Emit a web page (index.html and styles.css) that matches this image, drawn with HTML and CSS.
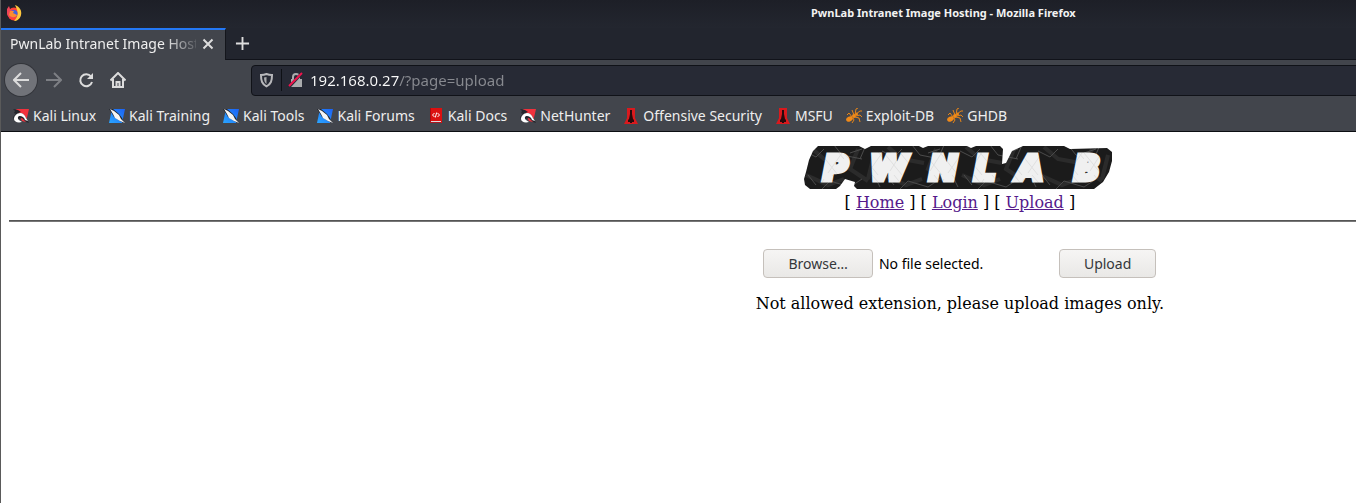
FILE: index.html
```html
<!DOCTYPE html>
<html lang="en">
<head>
<meta charset="utf-8">
<title>PwnLab Intranet Image Hosting</title>
<link rel="stylesheet" href="styles.css">
</head>
<body>
<svg class="defs" aria-hidden="true">
  <defs>
    <linearGradient id="blue" x1="0" y1="1" x2="1" y2="0"><stop offset="0" stop-color="#2aa5ff"/><stop offset="1" stop-color="#1b62f5"/></linearGradient>
    <symbol id="dragon" viewBox="0 0 16 16"><path d="M3 1h13l-3 13-4-1z" fill="#f0313c"/><path d="M0 1l5 1 3 2-5 2-2-1 1-2zM0 9l4-4 5 0 3 3 4 7-3-1-4-4-4 1 1 3-4 0z" fill="#24262d"/><path d="M1 11c0-3 3-6 6-6 3 0 5 2 6 5l2 3-3-1c-1-3-3-4-5-4s-3 2-1 4l3 2c-4 1-8 0-8-3z" fill="#fff"/></symbol>
    <symbol id="knife" viewBox="0 0 16 16"><path d="M3 1h13l-3 14H0z" fill="url(#blue)"/><path d="M0 1l4 0 6 5 3 4 2 5-4-2-6-4-3-5z" fill="#22252c"/><path d="M1 1l4 2 5 4 2 4 4 4-5-2-5-3-2-4z" fill="#f5f5f5"/></symbol>
    <symbol id="book" viewBox="0 0 16 16"><path d="M2 0h12v15H2z" fill="#dc1010"/><path d="M2 0h1v15H2z" fill="#a90b10"/><path d="M2 13h11v2H2z" fill="#ad1720"/><path d="M3 13h10v1H3z" fill="#ddd"/><path d="M6.500 5L4.500 7l2 2M9.500 5l2 2-2 2M8.700 4.500l-1.400 5" fill="none" stroke="#fff"/></symbol>
    <symbol id="tower" viewBox="0 0 16 16"><path d="M4 0h8v10l3 6H1l3-6z" fill="#d9191d"/><path d="M7 2h2v4l1 5 1 1v2H9v1H7v-1H5v-2l1-1 1-5z" fill="#260a0c"/></symbol>
    <symbol id="bug" viewBox="0 0 16 16"><g fill="#f08a19"><ellipse cx="3.500" cy="11" rx="3.500" ry="2.500" transform="rotate(-25 3.500 11)"/><circle cx="8" cy="8" r="2"/><circle cx="10.500" cy="6" r="1.500"/></g><path d="M6 9L3 5 1 7M8 7L6 2M9 7l1-6 2-1M10 6l4-3h2M10 8l4-1 2 2M9 9l4 1 1 4M7 10l1 2-2 3" fill="none" stroke="#e88517"/></symbol>
  </defs>
</svg>
<div class="window">
  <header class="titlebar">
    <svg class="firefox" viewBox="0 0 16 16" aria-hidden="true"><circle cx="8" cy="9" r="6.500" fill="#ff4136"/><path d="M9 0c5 2 7 6 6 10-1 4-4 6-7 6 4-4 5-8 1-16z" fill="#ffc83d"/><path d="M1 4l2-3 1 3 4 1-3 3 3 5C4 14 1 11 1 8z" fill="#f04458"/><circle cx="8" cy="8.500" r="3.500" fill="#4163dc"/><path d="M4 6l4 0-1 2 4 2c-1 3-6 3-8 0z" fill="#ff8b2f"/></svg>
    <span class="window-title">PwnLab Intranet Image Hosting - Mozilla Firefox</span>
  </header>
  <div class="tabs">
    <div class="tab">
      <span class="tab-title">PwnLab Intranet Image Hosting</span>
      <button class="tab-close" aria-label="Close tab"><svg viewBox="0 0 12 12"><path d="M1.500 1.500l9 9M10.500 1.500l-9 9"/></svg></button>
    </div>
    <button class="new-tab" aria-label="New tab"><svg viewBox="0 0 16 16"><path d="M8 1v14M1 8h14"/></svg></button>
  </div>
  <div class="toolbar">
    <button class="tool back" aria-label="Back"><svg viewBox="0 0 16 16"><path d="M16 8H1M8 1L1 8l7 7"/></svg></button>
    <button class="tool forward" aria-label="Forward"><svg viewBox="0 0 16 16"><path d="M0 8h15M8 1l7 7-7 7"/></svg></button>
    <button class="tool" aria-label="Reload"><svg viewBox="0 0 16 16"><path d="M13 4.500A6 6 0 1 0 14 10"/><path d="M15 1v6H9z" class="solid"/></svg></button>
    <button class="tool" aria-label="Home"><svg viewBox="0 0 16 16"><path d="M0.500 8.500L8 1l7.500 7.500M3 7v8h10V7"/><path d="M6.500 15v-5h3v5" /></svg></button>
    <div class="address">
      <svg class="shield" viewBox="0 0 16 16" aria-hidden="true"><path d="M8 2c2 0.800 3.500 1 5.500 1 0 6-1 9-5.500 11.300C3.500 12 2.500 9 2.500 3 4.500 3 6 2.800 8 2z"/><path d="M8 5v7C6 10.500 5.500 8 5.500 5.500z" class="solid"/></svg>
      <svg class="lock" viewBox="0 0 16 16" aria-hidden="true"><path d="M5 7V5a3 3 0 0 1 6 0v2"/><path d="M3 7h11v8H3z" class="solid"/><path d="M1 15L14 1" class="gap"/><path d="M1 14L14 1" class="slash"/></svg>
      <input class="url" type="text" aria-label="Address" value="192.168.0.27/?page=upload">
    </div>
  </div>
  <nav class="bookmarks" aria-label="Bookmarks">
    <a href="#"><svg><use href="#dragon"/></svg>Kali Linux</a>
    <a href="#"><svg><use href="#knife"/></svg>Kali Training</a>
    <a href="#"><svg><use href="#knife"/></svg>Kali Tools</a>
    <a href="#"><svg><use href="#knife"/></svg>Kali Forums</a>
    <a href="#"><svg><use href="#book"/></svg>Kali Docs</a>
    <a href="#"><svg><use href="#dragon"/></svg>NetHunter</a>
    <a href="#"><svg><use href="#tower"/></svg>Offensive Security</a>
    <a href="#"><svg><use href="#tower"/></svg>MSFU</a>
    <a href="#"><svg><use href="#bug"/></svg>Exploit-DB</a>
    <a href="#"><svg><use href="#bug"/></svg>GHDB</a>
  </nav>
  <main class="page">
    <svg class="logo" viewBox="0 0 312 48" role="img" aria-label="PwnLab">
      <defs>
        <pattern id="marble" width="78" height="48" patternUnits="userSpaceOnUse"><path d="M0 0h78v48H0z" fill="#1b1b1b"/><path d="M6 2l14 12 22 4M54 4l-8 20 18 12M2 30l22 10 16-6M70 10l-6 24" fill="none" stroke="#2b2b2b" stroke-width="4"/><path d="M0 6l12 6 8-8M14 48l12-12 20 6 12-8M30 0l8 10 20 4M62 0l-6 14M4 30l8 10M70 30l6 12M46 8l12-4" fill="none" stroke="#4a4a4a"/></pattern>
        <pattern id="chalk" width="40" height="30" patternUnits="userSpaceOnUse"><path d="M0 0h40v30H0z" fill="#f0f0f0"/><path d="M0 8l18 22M10 0l24 30M28 0l12 14M6 26L20 4M24 28L38 8" stroke="#e0e0e0"/></pattern>
      </defs>
      <path fill="url(#marble)" d="M14 1h41l6 3 6-3h48l4 2 5-2h39l4 2 5-2h24l3 3-1 15 4-1 6-12 11-5h41l6 3 37-1 5 4v9l-3 11-6 10-9 7H53l-3-3 1-4-10-3-5 7-4 3H6l-5-4-1-6 2-7 3-12 4-9z"/>
      <g class="letters">
        <text class="letters-face" y="35" x="19 66 125 170 213 270">PWNLAB</text>
      </g>
    </svg>
    <nav class="links">[ <a href="#">Home</a> ] [ <a href="#">Login</a> ] [ <a href="#">Upload</a> ]</nav>
    <hr class="rule">
    <form class="upload">
      <input class="file-input" type="file" id="file">
      <label class="button browse" for="file">Browse…</label>
      <span class="file-name">No file selected.</span>
      <button class="button" type="button">Upload</button>
    </form>
    <p class="message">Not allowed extension, please upload images only.</p>
  </main>
</div>
</body>
</html>
```
FILE: styles.css
```css
* { box-sizing: border-box; }
body { margin: 0; overflow: hidden; background: #fff; font-family: "Noto Sans", sans-serif; }
button { font: inherit; border: 0; padding: 0; background: none; }
svg { display: block; fill: none; }
.defs { position: absolute; width: 0; height: 0; }

/* The window is wider than the visible area and runs off its right edge. */
.window { width: 141.5%; min-height: 100vh; display: flex; flex-direction: column; border-left: 1px solid #5a5a5a; }

.titlebar { display: flex; align-items: center; height: 28px; padding: 0 54px 2px 5px; background: linear-gradient(#1d1f27, #23262f); color: #f2f2f2; }
.firefox { width: 16px; height: 16px; }
.window-title { flex: 1; text-align: center; font-size: 11px; font-weight: 700; line-height: 16px; }

.tabs { display: flex; height: 32px; background: #22252e; box-shadow: inset 0 -1px #11131a; }
.tab { display: flex; align-items: center; width: 225px; padding: 0 11px 2px 9px; border-top: 2px solid #2478f5; border-right: 1px solid #14161c; background: #42454c; color: #eee; }
.tab-title { flex: 1; overflow: hidden; white-space: nowrap; font-size: 14px; line-height: 20px; -webkit-mask-image: linear-gradient(to right, #000 154px, transparent 192px); mask-image: linear-gradient(to right, #000 154px, transparent 192px); }
.tab-close { margin-left: 6px; }
.tab-close svg { width: 12px; height: 12px; stroke: #ddd; stroke-width: 2; }
.new-tab { padding: 0 9px 2px; }
.new-tab svg { width: 15px; height: 15px; stroke: #ddd; stroke-width: 2; }

.toolbar { display: flex; align-items: center; height: 40px; padding-left: 4px; background: #42454c; }
.tool { display: grid; place-items: center; width: 32px; height: 32px; }
.tool svg { width: 16px; height: 16px; stroke: #dcdcdc; stroke-width: 2; }
.tool .solid { fill: #dcdcdc; stroke: none; }
.back { margin-right: 1px; border-radius: 50%; background: #717379; box-shadow: 0 0 0 1px #33353b; }
.tool.forward svg { stroke: #7d7f84; }
.address { flex: 1; display: flex; align-items: center; height: 31px; margin-left: 117px; border: 1px solid #101218; border-radius: 4px 0 0 4px; background: #272a35; }
.shield { width: 29px; height: 16px; stroke: #b8b8bb; stroke-width: 2; }
.shield .solid, .lock .solid { fill: #aaabad; stroke: none; }
.lock { width: 29px; height: 22px; padding: 3px 0; border-left: 1px solid #0e1015; stroke: #aaabad; stroke-width: 2; }
.lock .gap { stroke: #272a35; stroke-width: 3; }
.lock .slash { stroke: #f0144c; }
.url { flex: 1; height: 28px; padding: 0; border: 0; outline: 0; font: 15px/20px "Noto Sans", sans-serif; color: #f5f5f5; -webkit-text-fill-color: transparent; background: linear-gradient(to right, #fafafa 89px, #888a90 89px); -webkit-background-clip: text; background-clip: text; }

.bookmarks { display: flex; gap: 13px; align-items: center; height: 32px; padding-left: 12px; border-bottom: 1px solid #0c0e12; background: #42454c; white-space: nowrap; }
.bookmarks a { display: flex; align-items: center; gap: 4px; color: #eee; text-decoration: none; font-size: 14px; line-height: 20px; }
.bookmarks svg { width: 16px; height: 16px; }

.page { flex: 1; padding: 13px 8px 8px; background: #fff; color: #000; font: 16px/20px "DejaVu Serif", serif; text-align: center; }
.logo { width: 312px; height: 48px; margin: 0 auto; }
.letters { font-family: "DejaVu Sans", sans-serif; font-size: 34px; font-style: italic; font-weight: 700; }
.letters-face { fill: url(#chalk); stroke: url(#chalk); stroke-width: 5px; }
.links a { color: #551a8b; }
.rule { height: 2px; margin: 7px 0 27px; border: 0; border-top: 1px solid #555; border-bottom: 1px solid #777; }
.upload { display: flex; justify-content: center; align-items: center; font: 14px/20px "Noto Sans", sans-serif; }
.file-input { position: absolute; opacity: 0; width: 1px; height: 1px; }
.button { padding: 4px 24px 3px; border: 1px solid #c5c0bb; border-radius: 4px; background: linear-gradient(#f6f5f4, #e9e8e6); color: #34373a; }
.file-name { width: 180px; margin-left: 6px; text-align: left; }
.message { margin: 16px 0; }
```
